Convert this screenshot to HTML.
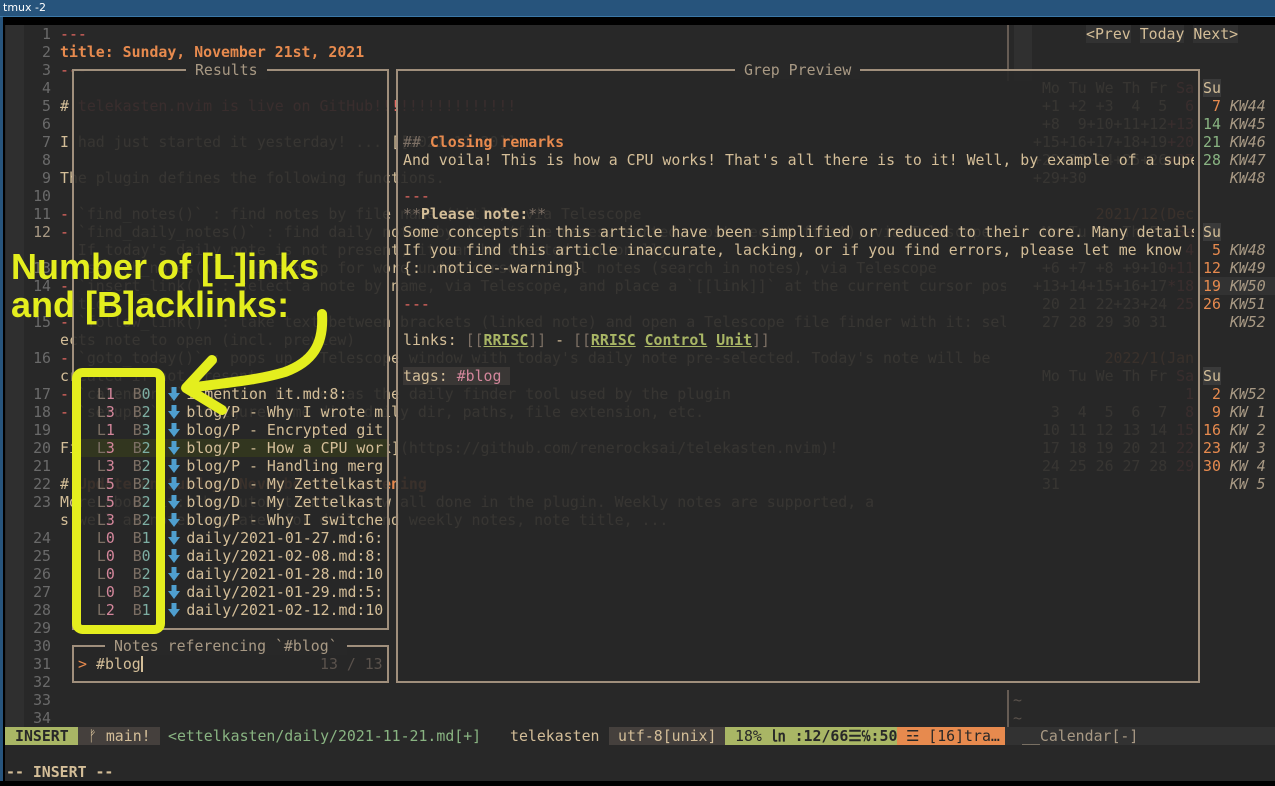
<!DOCTYPE html>
<html><head><meta charset="utf-8">
<style>
*{margin:0;padding:0;box-sizing:border-box}
html,body{width:1275px;height:786px;overflow:hidden;background:#000}
.m{font-family:"DejaVu Sans Mono","Liberation Mono",monospace;font-size:14.87px;line-height:18px;white-space:pre}
.a{position:absolute}
.r{position:absolute;height:18px;white-space:pre}
.fg{color:#d4be98}.red{color:#ea6962}.or{color:#e78a4e}.gr{color:#7c6f64}.aq{color:#89b482}.pk{color:#d3869b}.bl{color:#7daea3}.gn{color:#a9b665}
.b{font-weight:bold}
.ln{position:absolute;left:24px;width:27px;text-align:right;color:#6a6a6a}
.bd{position:absolute;border:2px solid #a08f7c}
.ov{position:absolute;background:rgba(40,40,40,0.91)}
.kw{color:#a89984;font-style:italic}
.u{text-decoration:underline}
</style></head><body>
<div class="a" style="left:0;top:0;width:1275px;height:17px;background:#27547c;border-bottom:1px solid #3d79a8"></div>
<div class="a" style="left:3px;top:1px;color:#fff;font-family:'DejaVu Sans',sans-serif;font-size:11px;line-height:14px">tmux -2</div>
<div class="a" style="left:0;top:17px;width:3px;height:769px;background:#27547c"></div>
<div class="a m" style="left:5px;top:25px;width:1270px;height:756px;background:#282828;overflow:hidden">
</div>
<div class="m a" style="left:0;top:0;width:1275px;height:786px">
<div class="a" style="left:6px;top:25px;width:18px;height:702px;background:#2f2f2f"></div>
<div class="ln" style="top:25px">1</div><div class="ln" style="top:43px">2</div><div class="ln" style="top:61px">3</div><div class="ln" style="top:79px">4</div><div class="ln" style="top:97px">5</div><div class="ln" style="top:115px">6</div><div class="ln" style="top:133px">7</div><div class="ln" style="top:151px">8</div><div class="ln" style="top:169px">9</div><div class="ln" style="top:187px">10</div><div class="ln" style="top:205px">11</div><div class="ln" style="top:223px;color:#a89984">12</div><div class="ln" style="top:259px">13</div><div class="ln" style="top:277px">14</div><div class="ln" style="top:313px">15</div><div class="ln" style="top:349px">16</div><div class="ln" style="top:385px">17</div><div class="ln" style="top:403px">18</div><div class="ln" style="top:421px">19</div><div class="ln" style="top:439px">20</div><div class="ln" style="top:457px">21</div><div class="ln" style="top:475px">22</div><div class="ln" style="top:493px">23</div><div class="ln" style="top:529px">24</div><div class="ln" style="top:547px">25</div><div class="ln" style="top:565px">26</div><div class="ln" style="top:583px">27</div><div class="ln" style="top:601px">28</div><div class="ln" style="top:619px">29</div><div class="ln" style="top:637px">30</div><div class="ln" style="top:655px">31</div><div class="ln" style="top:673px">32</div><div class="ln" style="top:691px">33</div><div class="ln" style="top:709px">34</div>

<div class="a" style="left:60px;top:0;width:946px;height:727px;overflow:hidden">
<div class="r red" style="left:0;top:25px">---</div>
<div class="r or b" style="left:0;top:43px">title: Sunday, November 21st, 2021</div>
<div class="r red" style="left:0;top:61px">---</div>
<div class="r" style="left:0;top:97px"><span class="fg">#</span><span class="red"> telekasten.nvim is live on GitHub!!!!!!!!!!!!!!!!</span></div>
<div class="r fg" style="left:0;top:133px">I had just started it yesterday! ... [[2021-11-20]]</div>
<div class="r fg" style="left:0;top:169px">The plugin defines the following functions.</div>
<div class="r fg" style="left:0;top:205px"><span class="red">-</span> `find_notes()` : find notes by file name (title), via Telescope</div>
<div class="r fg" style="left:0;top:223px"><span class="red">-</span> `find_daily_notes()` : find daily notes by date (file names, sorted, most recent first), via Telescope.</div>
<div class="r fg" style="left:0;top:241px">  If today's daily note is not present, it can be created optionally, ...</div>
<div class="r fg" style="left:0;top:259px"><span class="red">-</span> `search_notes()` : live grep for word under cursor in all notes (search in notes), via Telescope</div>
<div class="r fg" style="left:0;top:277px"><span class="red">-</span> `insert_link()` : select a note by name, via Telescope, and place a `[[link]]` at the current cursor position</div>
<div class="r fg" style="left:0;top:295px">  tion.</div>
<div class="r fg" style="left:0;top:313px"><span class="red">-</span> `follow_link()` : take text between brackets (linked note) and open a Telescope file finder with it: sel</div>
<div class="r fg" style="left:0;top:331px">ects note to open (incl. preview)</div>
<div class="r fg" style="left:0;top:349px"><span class="red">-</span> `goto_today()` : pops up a Telescope window with today's daily note pre-selected. Today's note will be</div>
<div class="r fg" style="left:0;top:367px">created if not present</div>
<div class="r fg" style="left:0;top:385px"><span class="red">-</span> `calendar()` : it can be used as the daily finder tool used by the plugin</div>
<div class="r fg" style="left:0;top:403px"><span class="red">-</span> `setup()` : configure home dir, daily dir, paths, file extension, etc.</div>
<div class="r fg" style="left:0;top:439px">Find it at [github.com/renerocksai/tk](https://github.com/renerocksai/telekasten.nvim)!</div>
<div class="r" style="left:0;top:475px"><span class="fg">#</span><span class="or b"> Update on Sunday, November 21st evening</span></div>
<div class="r fg" style="left:0;top:493px">More about it: the automation are now all done in the plugin. Weekly notes are supported, a</div>
<div class="r fg" style="left:0;top:511px">s well as note templates for daily and weekly notes, note title, ...</div>
</div>
<div class="a" style="left:1007px;top:25px;width:2px;height:56px;background:#665c54"></div>
<div class="a" style="left:1014px;top:25px;width:18px;height:56px;background:#303030"></div>
<div class="a" style="left:1007px;top:690px;width:2px;height:37px;background:#665c54"></div>
<div class="r" style="left:1013px;top:691px;color:#5a524c">~</div>
<div class="r" style="left:1013px;top:709px;color:#5a524c">~</div>
<div class="r fg" style="left:1086px;top:25px"><span style="background:#323232">&lt;Prev</span> <span style="background:#323232">Today</span> <span style="background:#323232">Next&gt;</span></div>
<div class="r fg" style="left:1033px;top:79px"> Mo Tu We Th Fr <span class="red">Sa</span> <span style="background:#3a3a3a">Su</span></div>
<div class="r fg" style="left:1033px;top:97px"> +1 +2 +3  4  5 <span class="red"> 6</span> <span class="or"> 7</span> <span class="kw">KW44</span></div>
<div class="r fg" style="left:1033px;top:115px"> +8  9+10+11+12<span class="red">+13</span> <span class="aq">14</span> <span class="kw">KW45</span></div>
<div class="r fg" style="left:1033px;top:133px">+15+16+17+18+19<span class="red">+20</span> <span class="aq">21</span> <span class="kw">KW46</span></div>
<div class="r fg" style="left:1033px;top:151px">+22+23+24+25+26<span class="red">+27</span> <span class="aq">28</span> <span class="kw">KW47</span></div>
<div class="r fg" style="left:1033px;top:169px">+29+30                <span class="kw">KW48</span></div>
<div class="r" style="left:1033px;top:205px;color:#e78a4e">       2021/12(Dec</div>
<div class="r fg" style="left:1033px;top:223px"> Mo Tu We Th Fr <span class="red">Sa</span> <span style="background:#3a3a3a">Su</span></div>
<div class="r fg" style="left:1033px;top:241px">                <span class="red"> 4</span> <span class="or"> 5</span> <span class="kw">KW48</span></div>
<div class="r fg" style="left:1033px;top:259px"> +6 +7 +8 +9+10<span class="red">+11</span> <span class="or">12</span> <span class="kw">KW49</span></div>
<div class="a" style="left:1199px;top:277px;width:76px;height:18px;background:#323232"></div>
<div class="r fg" style="left:1033px;top:277px">+13+14+15+16+17<span class="red">*18</span> <span class="or">19</span> <span class="kw">KW50</span></div>
<div class="r fg" style="left:1033px;top:295px"> 20 21 22+23+24 <span class="red">25</span> <span class="or">26</span> <span class="kw">KW51</span></div>
<div class="r fg" style="left:1033px;top:313px"> 27 28 29 30 31       <span class="kw">KW52</span></div>
<div class="r" style="left:1033px;top:349px;color:#e78a4e">        2022/1(Jan</div>
<div class="r fg" style="left:1033px;top:367px"> Mo Tu We Th Fr <span class="red">Sa</span> <span style="background:#3a3a3a">Su</span></div>
<div class="r fg" style="left:1033px;top:385px">               <span class="red">  1</span> <span class="or"> 2</span> <span class="kw">KW52</span></div>
<div class="r fg" style="left:1033px;top:403px">  3  4  5  6  7 <span class="red"> 8</span> <span class="or"> 9</span> <span class="kw">KW 1</span></div>
<div class="r fg" style="left:1033px;top:421px"> 10 11 12 13 14 <span class="red">15</span> <span class="or">16</span> <span class="kw">KW 2</span></div>
<div class="r fg" style="left:1033px;top:439px"> 17 18 19 20 21 <span class="red">22</span> <span class="or">23</span> <span class="kw">KW 3</span></div>
<div class="r fg" style="left:1033px;top:457px"> 24 25 26 27 28 <span class="red">29</span> <span class="or">30</span> <span class="kw">KW 4</span></div>
<div class="r fg" style="left:1033px;top:475px"> 31                   <span class="kw">KW 5</span></div>

<div class="ov" style="left:72px;top:69px;width:317px;height:561px"></div>
<div class="ov" style="left:72px;top:645px;width:317px;height:38px"></div>
<div class="ov" style="left:396px;top:69px;width:804px;height:614px"></div>
<div class="bd" style="left:72px;top:69px;width:317px;height:561px"></div>
<div class="bd" style="left:72px;top:645px;width:317px;height:38px"></div>
<div class="bd" style="left:396px;top:69px;width:804px;height:614px"></div>
<div class="r" style="left:186px;top:61px;background:#282828;color:#a89984"> Results </div>
<div class="r" style="left:105px;top:637px;background:#282828;color:#a89984"> Notes referencing `#blog` </div>
<div class="r" style="left:735px;top:61px;background:#282828;color:#a89984"> Grep Preview </div>

<div class="a" style="left:74px;top:439px;width:313px;height:18px;background:#32361f"></div>
<div class="a" style="left:76px;top:0;width:310px;height:640px;overflow:hidden">
<div class="r fg" style="left:3px;top:385px">  <span class="gr">L</span><span class="pk">1</span>  <span class="gr">B</span><span class="bl">0</span>    i mention it.md:8:</div>
<div class="r fg" style="left:3px;top:403px">  <span class="gr">L</span><span class="pk">3</span>  <span class="gr">B</span><span class="bl">2</span>    blog/P - Why I wrote m</div>
<div class="r fg" style="left:3px;top:421px">  <span class="gr">L</span><span class="pk">1</span>  <span class="gr">B</span><span class="bl">3</span>    blog/P - Encrypted git</div>
<div class="r fg" style="left:3px;top:439px">  <span class="gr">L</span><span class="pk">3</span>  <span class="gr">B</span><span class="bl">2</span>    blog/P - How a CPU wor</div>
<div class="r fg" style="left:3px;top:457px">  <span class="gr">L</span><span class="pk">3</span>  <span class="gr">B</span><span class="bl">2</span>    blog/P - Handling merg</div>
<div class="r fg" style="left:3px;top:475px">  <span class="gr">L</span><span class="pk">5</span>  <span class="gr">B</span><span class="bl">2</span>    blog/D - My Zettelkast</div>
<div class="r fg" style="left:3px;top:493px">  <span class="gr">L</span><span class="pk">5</span>  <span class="gr">B</span><span class="bl">2</span>    blog/D - My Zettelkast</div>
<div class="r fg" style="left:3px;top:511px">  <span class="gr">L</span><span class="pk">3</span>  <span class="gr">B</span><span class="bl">2</span>    blog/P - Why I switche</div>
<div class="r fg" style="left:3px;top:529px">  <span class="gr">L</span><span class="pk">0</span>  <span class="gr">B</span><span class="bl">1</span>    daily/2021-01-27.md:6:</div>
<div class="r fg" style="left:3px;top:547px">  <span class="gr">L</span><span class="pk">0</span>  <span class="gr">B</span><span class="bl">0</span>    daily/2021-02-08.md:8:</div>
<div class="r fg" style="left:3px;top:565px">  <span class="gr">L</span><span class="pk">0</span>  <span class="gr">B</span><span class="bl">2</span>    daily/2021-01-28.md:10</div>
<div class="r fg" style="left:3px;top:583px">  <span class="gr">L</span><span class="pk">0</span>  <span class="gr">B</span><span class="bl">2</span>    daily/2021-01-29.md:5:</div>
<div class="r fg" style="left:3px;top:601px">  <span class="gr">L</span><span class="pk">2</span>  <span class="gr">B</span><span class="bl">1</span>    daily/2021-02-12.md:10</div>
</div>
<svg class="a" style="left:168px;top:385px" width="12" height="234" viewBox="0 0 12 234">
<defs><path id="ar" d="M3.5 2h5v6h3.5l-6 8l-6-8h3.5z" fill="#4f9fcf"/></defs>
<use href="#ar" y="0"/><use href="#ar" y="18"/><use href="#ar" y="36"/><use href="#ar" y="54"/><use href="#ar" y="72"/><use href="#ar" y="90"/><use href="#ar" y="108"/><use href="#ar" y="126"/><use href="#ar" y="144"/><use href="#ar" y="162"/><use href="#ar" y="180"/><use href="#ar" y="198"/><use href="#ar" y="216"/>
</svg>
<div class="r" style="left:78px;top:655px;color:#e78a4e">&gt;</div>
<div class="r fg" style="left:96px;top:655px">#blog</div>
<div class="a" style="left:141px;top:656px;width:2px;height:16px;background:#d4be98"></div>
<div class="r" style="left:320px;top:655px;color:#5a524c">13 / 13</div>

<div class="a" style="left:403px;top:0;width:791px;height:680px;overflow:hidden">
<div class="r" style="left:0;top:133px"><span class="gr">##</span> <span class="or b">Closing remarks</span></div>
<div class="r fg" style="left:0;top:151px">And voila! This is how a CPU works! That's all there is to it! Well, by example of a super simple CPU</div>
<div class="r red" style="left:0;top:187px">---</div>
<div class="r fg" style="left:0;top:205px"><span class="gr">**</span><span class="b">Please note:</span><span class="gr">**</span></div>
<div class="r fg" style="left:0;top:223px">Some concepts in this article have been simplified or reduced to their core. Many details</div>
<div class="r fg" style="left:0;top:241px">If you find this article inaccurate, lacking, or if you find errors, please let me know</div>
<div class="r fg" style="left:0;top:259px">{: .notice--warning}</div>
<div class="r red" style="left:0;top:295px">---</div>
<div class="r fg" style="left:0;top:331px">links: <span class="gr">[[</span><span class="gn u b">RRISC</span><span class="gr">]]</span> - <span class="gr">[[</span><span class="gn u b">RRISC</span> <span class="gn u b">Control</span> <span class="gn u b">Unit</span><span class="gr">]]</span></div>
<div class="r fg" style="left:0;top:367px;background:#3a3735">tags: <span class="pk">#blog</span> </div>
</div>

<div class="a" style="left:5px;top:727px;width:1270px;height:18px;background:#282828"></div>
<div class="r b" style="left:5px;top:727px;width:73px;background:#a9b665;color:#282828;padding-left:10px">INSERT</div>
<div class="r fg" style="left:78px;top:727px;width:82px;background:#45403d;padding-left:10px">ᚠ main!</div>
<div class="r aq" style="left:168px;top:727px">&lt;ettelkasten/daily/2021-11-21.md[+]</div>
<div class="r fg" style="left:510px;top:727px">telekasten</div>
<div class="r fg" style="left:609px;top:727px;width:116px;background:#45403d;padding-left:9px">utf-8[unix]</div>
<div class="r" style="left:725px;top:727px;width:172px;background:#a9b665;color:#282828;padding-left:10px">18% <b>㏑ :12/66☰℅:50</b></div>
<div class="r" style="left:897px;top:727px;width:108px;background:#e78a4e;color:#282828;padding-left:9px">☲ [16]tra…</div>
<div class="r" style="left:1005px;top:727px;width:270px;background:#323232;color:#a89984;padding-left:17px">__Calendar[-]</div>
<div class="r fg b" style="left:6px;top:763px">-- INSERT --</div>
</div>

<div class="a" style="left:11px;top:248px;font-family:'Liberation Sans',sans-serif;font-weight:bold;font-size:36px;line-height:38px;color:#e4ee1e;white-space:pre">Number of [L]inks
and [B]acklinks:</div>
<svg class="a" style="left:0;top:0" width="1275" height="786">
<rect x="76.5" y="372.5" width="84" height="257" rx="6" fill="none" stroke="#e4ee1e" stroke-width="9"/>
<path d="M322 314 C324 345 312 362 285 372 C255 381 222 383 188 388" fill="none" stroke="#e4ee1e" stroke-width="10" stroke-linecap="round"/>
<path d="M212 360 L186 388 L222 410" fill="none" stroke="#e4ee1e" stroke-width="10" stroke-linecap="round" stroke-linejoin="round"/>
</svg>
<div class="a" style="left:0;top:781px;width:1275px;height:5px;background:#000"></div>
</body></html>
